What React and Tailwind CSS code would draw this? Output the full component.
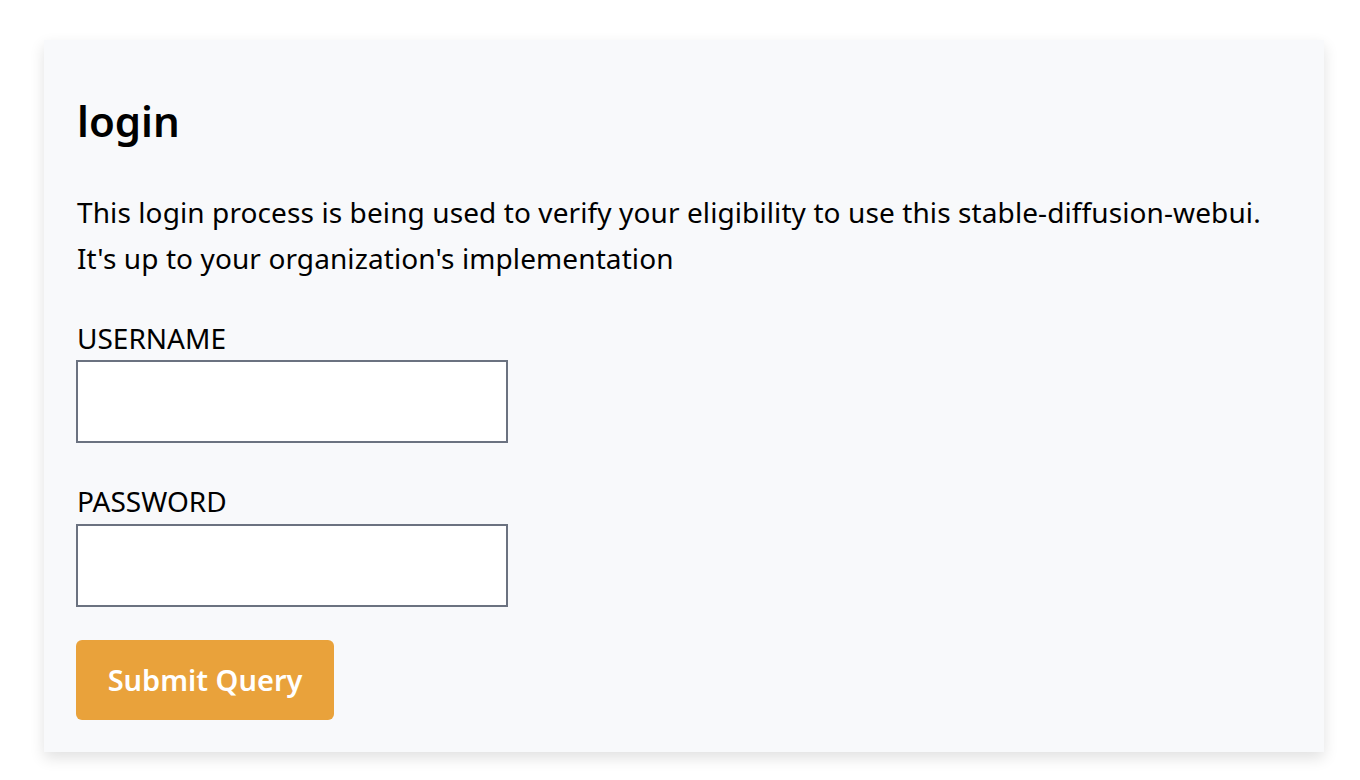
export default function App() {
  return (
    <div className="min-h-screen bg-white pt-10 px-[44px]" style={{ fontFamily: '"Noto Sans", "Open Sans", sans-serif' }}>
      <div className="w-[1280px] h-[712px] bg-[#f8f9fb] shadow-[0_6px_14px_rgba(0,0,0,0.12)] pl-[32px] pr-[33px] pt-[52px]">
        <h1 className="pl-px text-[42px] leading-[58px] font-semibold text-black">login</h1>
        <p className="mt-[39px] pl-px text-[28px] leading-[46px] text-black tracking-[0.1px]">
          This login process is being used to verify your eligibility to use this stable-diffusion-webui.
          <br />
          It's up to your organization's implementation
        </p>
        <form className="mt-[40px] flex flex-col" onSubmit={(e) => e.preventDefault()}>
          <label className="pl-px text-[28px] leading-[34px] text-black">USERNAME</label>
          <input type="text" className="mt-[5px] w-[432px] h-[83px] border-2 border-[#6b7280] bg-white outline-none" />
          <label className="mt-[41px] pl-px text-[28px] leading-[34px] text-black">PASSWORD</label>
          <input type="password" className="mt-[6px] w-[432px] h-[83px] border-2 border-[#6b7280] bg-white outline-none" />
          <button type="submit" className="mt-[33px] w-[258px] h-[80px] rounded-md bg-[#e9a23b] text-white text-[29px] font-semibold">
            Submit Query
          </button>
        </form>
      </div>
    </div>
  );
}
